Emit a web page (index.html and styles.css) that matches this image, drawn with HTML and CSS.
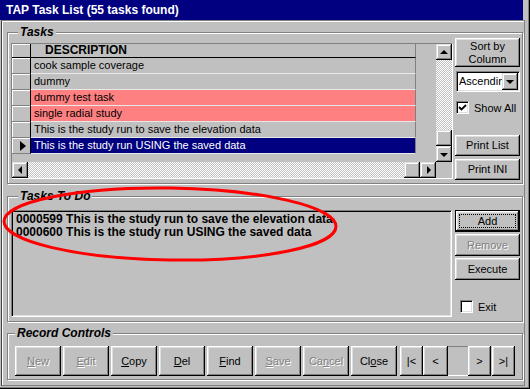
FILE: index.html
```html
<!DOCTYPE html>
<html lang="en">
<head>
  <meta charset="UTF-8">
  <title>TAP Task List</title>
  <link rel="stylesheet" href="styles.css">
</head>
<body>
  <div class="window">
    <div class="titlebar">TAP Task List (55 tasks found)</div>
    <div class="client">

      <div class="group tasks">
        <span class="legend">Tasks</span>
        <div class="grid">
          <div class="sheet">
            <div class="row head"><span class="sel"></span><span class="cell">DESCRIPTION</span></div>
            <div class="row"><span class="sel"></span><span class="cell">cook sample coverage</span></div>
            <div class="row"><span class="sel"></span><span class="cell">dummy</span></div>
            <div class="row pink"><span class="sel"></span><span class="cell">dummy test task</span></div>
            <div class="row pink"><span class="sel"></span><span class="cell">single radial study</span></div>
            <div class="row"><span class="sel"></span><span class="cell">This is the study run to save the elevation data</span></div>
            <div class="row current"><span class="sel"><i class="pointer"></i></span><span class="cell">This is the study run USING the saved data</span></div>
          </div>
          <div class="vscroll">
            <span class="sbtn"><i class="arrow up"></i></span>
            <span class="track"></span>
            <span class="sbtn"></span>
            <span class="sbtn"><i class="arrow down"></i></span>
          </div>
          <div class="hscroll">
            <span class="sbtn"><i class="arrow left"></i></span>
            <span class="track"></span>
            <span class="sbtn"></span>
            <span class="sbtn"><i class="arrow right"></i></span>
          </div>
          <div class="corner"></div>
        </div>
        <div class="side">
          <button class="btn sort">Sort by<br>Column</button>
          <div class="combo">
            <span class="field">Ascending</span>
            <span class="sbtn"><i class="arrow down"></i></span>
          </div>
          <label class="checkrow showall">
            <span class="check"><svg viewBox="0 0 11 11" width="11" height="11"><polyline points="2,5 4.5,7.5 9,3" fill="none" stroke="#000" stroke-width="1.8"/></svg></span>
            Show All
          </label>
          <button class="btn printlist">Print List</button>
          <button class="btn printini">Print INI</button>
        </div>
      </div>

      <div class="group todo">
        <span class="legend">Tasks To Do</span>
        <div class="listbox">
          <div>0000599 This is the study run to save the elevation data</div>
          <div>0000600 This is the study run USING the saved data</div>
        </div>
        <div class="side">
          <button class="btn default"><span class="focus">Add</span></button>
          <button class="btn" disabled>Remove</button>
          <button class="btn">Execute</button>
          <label class="checkrow exit">
            <span class="check"></span>
            Exit
          </label>
        </div>
      </div>

      <div class="group records">
        <span class="legend">Record Controls</span>
        <button class="btn rec" disabled><u>N</u>ew</button>
        <button class="btn rec" disabled><u>E</u>dit</button>
        <button class="btn rec"><u>C</u>opy</button>
        <button class="btn rec"><u>D</u>el</button>
        <button class="btn rec"><u>F</u>ind</button>
        <button class="btn rec" disabled><u>S</u>ave</button>
        <button class="btn rec" disabled>Ca<u>n</u>cel</button>
        <button class="btn rec">Cl<u>o</u>se</button>
        <div class="nav">
          <button class="btn first">|&lt;</button>
          <button class="btn prev">&lt;</button>
          <span class="recno"></span>
          <button class="btn next">&gt;</button>
          <button class="btn last">&gt;|</button>
        </div>
      </div>

    </div>

    <!-- red marker drawn over the to-do list -->
    <svg class="mark" width="530" height="389" viewBox="0 0 530 389">
      <ellipse cx="170" cy="224" rx="166" ry="36" transform="rotate(0.9 170 224)" fill="none" stroke="#ff0000" stroke-width="3"/>
    </svg>
  </div>
</body>
</html>
```

FILE: styles.css
```css
* {
  box-sizing: border-box;
}

body {
  margin: 0;
  background-color: #c0c0c0;
  font-family: "Liberation Sans", Arial, sans-serif;
  font-size: 11px;
  color: #000;
}

.window {
  position: relative;
  width: 530px;
  height: 389px;
  display: flex;
  flex-direction: column;
  background-color: #c0c0c0;
  box-shadow: inset -1px -1px #000, inset -2px -2px #808080;
  overflow: hidden;
}

.titlebar {
  width: 523px;
  height: 20px;
  padding-left: 6px;
  background-color: #000080;
  color: #fff;
  font-weight: bold;
  font-size: 12px;
  line-height: 20px;
  white-space: nowrap;
}

.client {
  flex: 1;
  margin: 0 5px 3px 1px;
  padding: 11px 1px 0 5px;
  border: 1px solid #808080;
  border-left-color: #404040;
  box-shadow: inset 1px 1px #fff;
}

/* etched group boxes */
.group {
  position: relative;
  display: flex;
  align-items: flex-start;
  border: 1px solid #808080;
  box-shadow: inset 1px 1px #fff, 1px 1px #fff;
}

.legend {
  position: absolute;
  top: -8px;
  left: 10px;
  padding: 0 2px;
  background-color: #c0c0c0;
  font-style: italic;
  font-weight: bold;
  font-size: 12px;
  line-height: 14px;
  white-space: nowrap;
}

.records .legend {
  left: 7px;
}

/* buttons */
.btn {
  display: flex;
  align-items: center;
  justify-content: center;
  padding: 0;
  border: none;
  background-color: #c0c0c0;
  box-shadow: inset -1px -1px #000, inset 1px 1px #fff, inset -2px -2px #808080, inset 2px 2px #dfdfdf;
  font-family: "Liberation Sans", Arial, sans-serif;
  font-size: 11px;
  color: #000;
  line-height: 13px;
}

.btn:disabled {
  color: #808080;
  text-shadow: 1px 1px #fff;
}

.btn u {
  text-underline-offset: 1px;
}

.btn.default {
  padding: 3px;
  border: 1px solid #000;
}

.btn.default .focus {
  flex: 1;
  align-self: stretch;
  display: flex;
  align-items: center;
  justify-content: center;
  border: 1px dotted #000;
}

/* tasks */
.tasks {
  height: 152px;
  padding: 5px 2px 0 3px;
  gap: 2px;
}

.grid {
  margin-top: 5px;
  width: 442px;
  height: 136px;
  display: grid;
  grid-template-columns: 1fr 16px;
  grid-template-rows: 1fr 16px;
  border: 1px solid;
  border-color: #808080 #fff #fff #808080;
}

.sheet {
  overflow: hidden;
  background-color: #c0c0c0;
}

.row {
  display: flex;
  height: 16px;
}

.sel {
  width: 19px;
  display: flex;
  align-items: center;
  justify-content: center;
  border-right: 1px solid #000;
  border-bottom: 1px solid #808080;
  box-shadow: inset 1px 1px #fff;
}

.cell {
  width: 385px;
  padding-left: 3px;
  border-right: 1px solid #808080;
  border-bottom: 1px solid #e8e8e8;
  line-height: 15px;
  white-space: nowrap;
  overflow: hidden;
}

.row.head {
  height: 14px;
}

.head .sel,
.head .cell {
  border-bottom-color: #000;
}

.head .cell {
  padding-left: 14px;
  font-weight: bold;
  font-size: 12px;
  line-height: 13px;
}

.pink .cell {
  background-color: #ff8080;
}

.current .cell {
  background-color: #000080;
  color: #fff;
}

.pointer {
  margin-left: 3px;
  border-left: 6px solid #000;
  border-top: 5px solid transparent;
  border-bottom: 5px solid transparent;
}

/* scroll bars */
.vscroll,
.hscroll {
  display: flex;
}

.vscroll {
  flex-direction: column;
}

.sbtn {
  flex: none;
  width: 16px;
  height: 16px;
  display: flex;
  align-items: center;
  justify-content: center;
  background-color: #c0c0c0;
  box-shadow: inset -1px -1px #000, inset 1px 1px #dfdfdf, inset -2px -2px #808080, inset 2px 2px #fff;
}

.track {
  flex: 1;
  background: repeating-conic-gradient(#c0c0c0 0 25%, #fff 0 50%) 0 0 / 2px 2px;
}

.corner {
  background-color: #c0c0c0;
}

.arrow {
  width: 0;
  height: 0;
}

.arrow.up {
  border-left: 4px solid transparent;
  border-right: 4px solid transparent;
  border-bottom: 4px solid #000;
}

.arrow.down {
  margin-top: 1px;
  border-left: 4px solid transparent;
  border-right: 4px solid transparent;
  border-top: 4px solid #000;
}

.arrow.left {
  border-top: 4px solid transparent;
  border-bottom: 4px solid transparent;
  border-right: 4px solid #000;
}

.arrow.right {
  margin-left: 1px;
  border-top: 4px solid transparent;
  border-bottom: 4px solid transparent;
  border-left: 4px solid #000;
}

/* right-hand controls */
.side {
  width: 65px;
  flex: none;
  display: flex;
  flex-direction: column;
}

.sort {
  height: 29px;
}

.combo {
  margin: 4px 0 0 1px;
  height: 21px;
  display: flex;
  padding: 1px;
  background-color: #fff;
  border: 1px solid;
  border-color: #808080 #fff #fff #808080;
  box-shadow: inset 1px 1px #000, inset -1px -1px #dfdfdf;
}

.field {
  flex: 1;
  padding-left: 1px;
  line-height: 17px;
  white-space: nowrap;
  overflow: hidden;
}

.combo .sbtn {
  height: 17px;
}

.checkrow {
  display: flex;
  align-items: center;
  gap: 5px;
  height: 13px;
}

.check {
  width: 13px;
  height: 13px;
  display: flex;
  align-items: center;
  justify-content: center;
  background-color: #fff;
  border: 1px solid;
  border-color: #808080 #fff #fff #808080;
  box-shadow: inset 1px 1px #000, inset -1px -1px #dfdfdf;
}

.showall {
  margin: 9px 0 0 1px;
}

.printlist {
  margin-top: 21px;
  height: 21px;
}

.printini {
  margin-top: 3px;
  height: 21px;
}

/* tasks to do */
.todo {
  height: 126px;
  margin-top: 12px;
  padding: 13px 2px 0 3px;
  gap: 3px;
}

.listbox {
  width: 441px;
  height: 107px;
  padding: 2px 4px;
  border: 1px solid;
  border-color: #808080 #fff #fff #808080;
  box-shadow: inset 1px 1px #000, inset -1px -1px #dfdfdf;
  font-weight: bold;
  font-size: 12px;
  line-height: 13px;
  white-space: nowrap;
}

.todo .side {
  gap: 2px;
}

.todo .btn {
  height: 22px;
}

.exit {
  margin: 18px 0 0 5px;
}

/* record controls */
.records {
  height: 47px;
  margin-top: 11px;
  padding: 12px 0 0 7px;
  gap: 2px;
}

.rec {
  width: 46px;
  height: 30px;
}

.nav {
  display: flex;
  margin-left: 1px;
}

.nav .btn {
  height: 30px;
  width: 23px;
}

.nav .prev {
  width: 25px;
}

.nav .last {
  margin-left: 1px;
}

.recno {
  width: 20px;
  height: 30px;
  border-top: 1px solid #808080;
  border-bottom: 1px solid #fff;
}

.mark {
  position: absolute;
  top: 0;
  left: 0;
  pointer-events: none;
}
```
